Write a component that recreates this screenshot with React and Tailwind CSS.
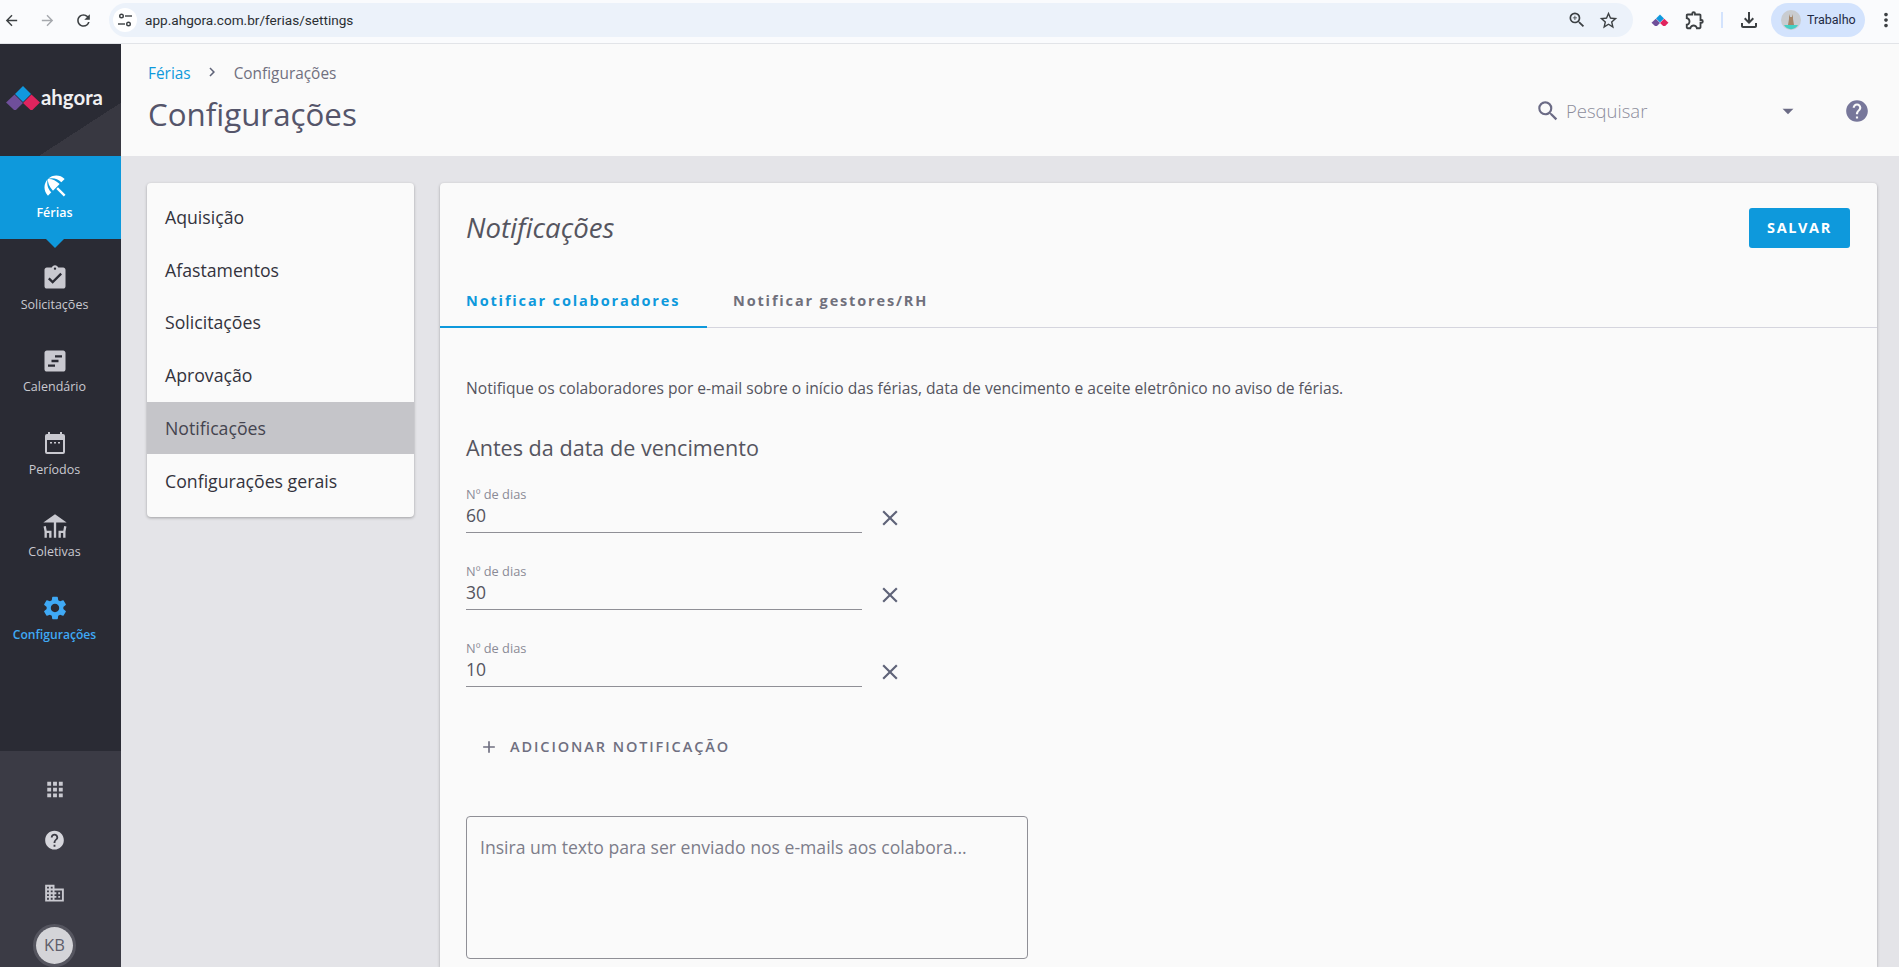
import React from "react";
import {
  MdArrowBack, MdArrowForward, MdRefresh, MdZoomIn, MdStarBorder, MdOutlineExtension, MdOutlineFileDownload, MdMoreVert,
  MdBeachAccess, MdAssignmentTurnedIn, MdViewTimeline, MdDeck, MdSettings, MdApps, MdHelp, MdDomain, MdSearch, MdClose, MdAdd, MdArrowDropDown, MdChevronRight,
} from "react-icons/md";

const Tune = () => (
  <svg width="16" height="16" viewBox="0 0 16 16" fill="none" stroke="#3c4043" strokeWidth="1.4">
    <circle cx="4.5" cy="4" r="1.8" /><path d="M8 4h7" /><circle cx="11.5" cy="12" r="1.8" /><path d="M1 12h7" />
  </svg>
);

const Logo = ({ size = 36 }) => (
  <svg width={size} height={size * 0.72} viewBox="0 0 36 26">
    <path d="M18 1l8 8-8 8-8-8z" fill="#1098de" />
    <path d="M9.5 9.5L18 18l-8 8-9-8.5z" fill="#6f4f9a" />
    <path d="M26.5 9.5L35 17.5 26.5 26 18 18z" fill="#e0245e" />
  </svg>
);

const Periodos = () => (
  <svg width="24" height="24" viewBox="0 0 24 24" fill="#c9c9d0">
    <path d="M5 1h2v2h10V1h2v2h1a2 2 0 012 2v16a2 2 0 01-2 2H4a2 2 0 01-2-2V5a2 2 0 012-2h1zM4 9v12h16V9zM7 11h2v1.6H7zm4 0h2v1.6h-2zm4 0h2v1.6h-2z" fillRule="evenodd" />
  </svg>
);

const nav = [
  { label: "Solicitações", icon: <MdAssignmentTurnedIn size={28} color="#c9c9d0" />, cls: "mt-[9px]" },
  { label: "Calendário", icon: <MdViewTimeline size={28} color="#c9c9d0" /> },
  { label: "Períodos", icon: <Periodos /> },
  { label: "Coletivas", icon: <MdDeck size={28} color="#c9c9d0" /> },
  { label: "Configurações", icon: <MdSettings size={28} color="#3fa9f5" />, active: true },
];

const menu = ["Aquisição", "Afastamentos", "Solicitações", "Aprovação", "Notificações", "Configurações gerais"];

function Field({ value }) {
  return (
    <div className="flex items-end h-[77px]">
      <div className="w-[396px] h-[63px] border-b border-[#8f8f96] flex flex-col justify-end pb-[5px]">
        <div className="text-[12.8px] leading-[16px] text-[#8a8a96]">Nº de dias</div>
        <div className="text-[17.5px] leading-[24px] text-[#55555f] mt-[1px]">{value}</div>
      </div>
      <MdClose size={26} color="#5f6378" className="ml-[15px] mb-[2px]" />
    </div>
  );
}

export default function App() {
  return (
    <div className="h-screen w-full overflow-hidden flex flex-col bg-[#e4e4e8] font-['Open_Sans',sans-serif]">
      <div className="h-[44px] shrink-0 bg-[#fafbfd] border-b border-[#e2e4e8] flex items-center pb-[3px] font-['Roboto',sans-serif] text-[#3c4043]">
        <MdArrowBack size={17} className="ml-[3px]" />
        <MdArrowForward size={17} color="#a5a8ad" className="ml-[19px]" />
        <MdRefresh size={19} className="ml-[18px]" />
        <div className="ml-[16px] w-[1524px] h-[34px] rounded-full bg-[#ecf2fa] flex items-center pl-[4px] pr-[14px]">
          <div className="w-[24px] h-[24px] rounded-full bg-white flex items-center justify-center"><Tune /></div>
          <span className="ml-[8px] text-[13.6px] text-[#2b2f33]">app.ahgora.com.br/ferias/settings</span>
          <MdZoomIn size={20} className="ml-auto" />
          <MdStarBorder size={21} className="ml-[11px]" />
        </div>
        <span className="ml-[18px]"><Logo size={18} /></span>
        <MdOutlineExtension size={22} className="ml-[15px]" />
        <div className="ml-[15px] w-[2px] h-[16px] bg-[#d3e3fd]" />
        <MdOutlineFileDownload size={24} className="ml-[14px]" />
        <div className="ml-[10px] w-[94px] h-[34px] rounded-full bg-[#d3e3fd] flex items-center pl-[10px]">
          <svg width="20" height="20" viewBox="0 0 20 20">
            <circle cx="10" cy="10" r="10" fill="#c9ccd0" />
            <path d="M3 15h14a8 8 0 01-14 0z" fill="#45cfc5" />
            <path d="M8 4l1 3h2l1-3 0 5 1 6H7l1-6z" fill="#a5866a" />
          </svg>
          <span className="ml-[6px] text-[12.5px] text-[#1f2a44]">Trabalho</span>
        </div>
        <MdMoreVert size={22} className="ml-[10px]" />
      </div>

      <div className="flex-1 flex min-h-0">
        <aside className="w-[121px] shrink-0 flex flex-col bg-[#2a2b34]">
          <div className="h-[112px] shrink-0 bg-[linear-gradient(147deg,#2a2b34_72%,#383841_72%)] flex items-center pl-[5px] pb-[5px]">
            <Logo size={36} />
            <span className="mb-[1px] text-[20.4px] font-bold text-[#f0f0f2] font-['Lato',sans-serif]">ahgora</span>
          </div>
          <div className="relative h-[83px] shrink-0 bg-[#0e99dc] flex flex-col items-center pt-[16px] pr-[12px]">
            <MdBeachAccess size={28} color="#ffffff" />
            <span className="mt-[4px] text-[12.5px] font-semibold text-white leading-[18px]">Férias</span>
            <div className="absolute top-full left-[46px] w-0 h-0 border-x-[9px] border-x-transparent border-t-[9px] border-t-[#0e99dc]" />
          </div>
          {nav.map((n) => (
            <div key={n.label} className={`h-[82.5px] shrink-0 flex flex-col items-center pt-[16px] pr-[12px] ${n.cls || ""}`}>
              <div className="h-[28px] flex items-center justify-center">{n.icon}</div>
              <span className={`mt-[3.5px] leading-[18px] ${n.active ? "text-[12.1px] text-[#3fa9f5] font-semibold" : "text-[12.5px] text-[#c9c9d0]"}`}>{n.label}</span>
            </div>
          ))}
          <div className="mt-auto h-[216px] shrink-0 bg-[#3b3b45] flex flex-col items-center pt-[27px] pr-[12px]">
            <MdApps size={28} color="#c9c9d0" />
            <MdHelp size={27} color="#d6d6dc" className="mt-[28px]" />
            <MdDomain size={27} color="#c9c9d0" className="mt-[30px]" />
            <div className="mt-[20px] w-[43px] h-[43px] rounded-full border-[3px] border-[#55555f] flex items-center justify-center shrink-0">
              <div className="w-[37px] h-[37px] rounded-full bg-[#d4d4d8] flex items-center justify-center text-[16.5px] text-[#5f5f6b]">KB</div>
            </div>
          </div>
        </aside>

        <div className="flex-1 min-w-0 flex flex-col">
          <header className="h-[112px] shrink-0 bg-[#fafafa] flex justify-between pl-[27px] pr-[29px]">
            <div className="pt-[18px]">
              <div className="flex items-center text-[15.4px] leading-[24px]">
                <span className="text-[#0e99dc]">Férias</span>
                <MdChevronRight size={18} color="#5f6378" className="ml-[12px] mb-[4px]" />
                <span className="ml-[13px] text-[#70707f]">Configurações</span>
              </div>
              <h1 className="mt-[6px] text-[31.3px] leading-[44px] text-[#55556a]">Configurações</h1>
            </div>
            <div className="flex items-center pt-[22px]">
              <MdSearch size={26} color="#6b6b85" />
              <span className="ml-[5px] w-[209px] text-[18.5px] font-light text-[#8d8d9c]">Pesquisar</span>
              <MdArrowDropDown size={26} color="#6b6b85" />
              <MdHelp size={26} color="#77779a" className="ml-[43px]" />
            </div>
          </header>

          <main className="flex-1 min-h-0 flex gap-[26px] pl-[26px] pr-[22px] pt-[27px]">
            <nav className="w-[267px] h-[334px] shrink-0 bg-[#fafafa] rounded-[4px] shadow-[0_1px_3px_rgba(0,0,0,0.3)] pt-[8px]">
              {menu.map((m) => (
                <div key={m} className={`h-[52.7px] flex items-center pl-[18px] text-[17.7px] ${m === "Notificações" ? "bg-[#c5c5c9] text-[#44444f]" : "text-[#33333d]"}`}>{m}</div>
              ))}
            </nav>

            <section className="flex-1 min-w-0 bg-[#fafafa] rounded-t-[4px] shadow-[0_1px_3px_rgba(0,0,0,0.3)]">
              <div className="flex items-center justify-between h-[90px] pl-[26px] pr-[27px]">
                <h2 className="italic text-[27.6px] text-[#55555f]">Notificações</h2>
                <button className="w-[101px] h-[40px] rounded-[3px] bg-[#0e99dc] text-white text-[14.5px] font-bold tracking-[1.6px]">SALVAR</button>
              </div>
              <div className="flex h-[55px] border-b border-[#d5d5de]">
                <div className="w-[267px] h-[55px] border-b-[2px] border-[#0e99dc] flex items-center pl-[26px] pt-[2px] text-[14.5px] font-bold tracking-[1.85px] text-[#0e99dc]">Notificar colaboradores</div>
                <div className="ml-[26px] flex items-center pt-[1px] text-[14.5px] font-bold tracking-[1.85px] text-[#70707c]">Notificar gestores/RH</div>
              </div>
              <div className="pl-[26px]">
                <p className="mt-[49px] text-[15.63px] leading-[22px] text-[#55555f] whitespace-nowrap">Notifique os colaboradores por e-mail sobre o início das férias, data de vencimento e aceite eletrônico no aviso de férias.</p>
                <h3 className="mt-[34px] text-[21.6px] leading-[30px] text-[#55555f]">Antes da data de vencimento</h3>
                <div className="-mt-[7px]">
                  <Field value="60" />
                  <Field value="30" />
                  <Field value="10" />
                </div>
                <div className="mt-[46px] flex items-center pl-[13px] h-[28px]">
                  <MdAdd size={20} color="#6f6f80" />
                  <span className="ml-[11px] text-[14.5px] font-semibold tracking-[1.9px] text-[#6f6f80]">ADICIONAR NOTIFICAÇÃO</span>
                </div>
                <div className="mt-[55px] w-[562px] h-[143px] border border-[#8f8f96] rounded-[4px] px-[13px] py-[17px] text-[17.6px] leading-[26px] text-[#7d7d8a]">
                  Insira um texto para ser enviado nos e-mails aos colabora...
                </div>
              </div>
            </section>
          </main>
        </div>
      </div>
    </div>
  );
}
